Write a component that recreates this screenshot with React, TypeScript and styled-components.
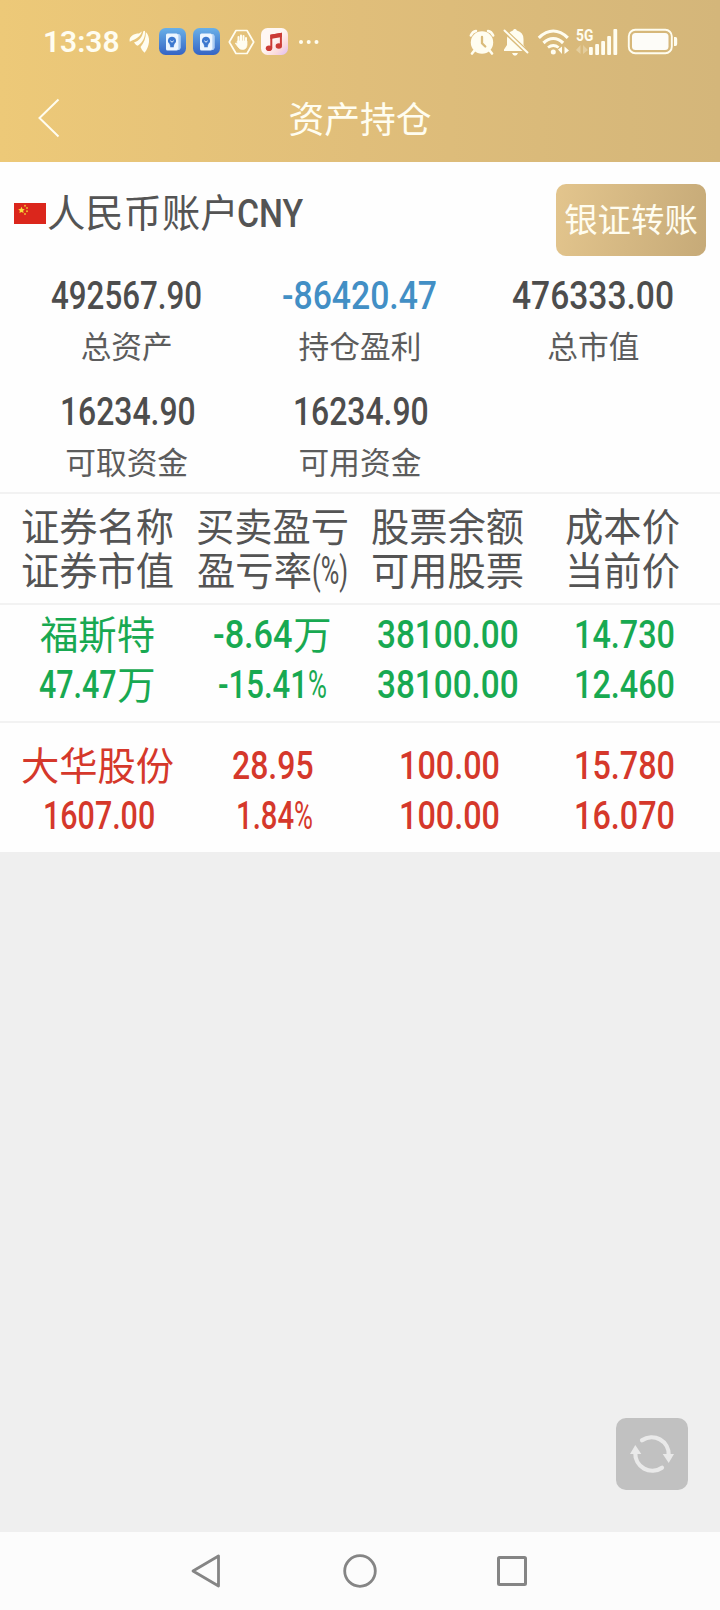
import React, { useLayoutEffect, useRef, useState } from "react";
import styled, { createGlobalStyle } from "styled-components";

const GlobalStyle = createGlobalStyle`
  * { box-sizing: border-box; }
  body { margin: 0; background: #efefef; font-family: "Noto Sans CJK SC", "Noto Sans", sans-serif; }
  svg { display: block; flex: none; }
`;

const Page = styled.div`
  width: 720px;
  height: 1610px;
  display: flex;
  flex-direction: column;
  overflow: hidden;
`;

const Header = styled.header`
  height: 162px;
  background: linear-gradient(90deg, #edc978 0%, #e0be7a 50%, #d4b67a 100%);
  color: #fffdf0;
`;

const StatusBar = styled.div`
  height: 83px;
  padding: 0 41px 0 43px;
  display: flex;
  justify-content: space-between;
  align-items: center;
`;

const StatusGroup = styled.div`
  display: flex;
  align-items: center;
`;

const Slot = styled.div<{ $gap: number }>`
  margin-left: ${(p) => p.$gap}px;
`;

const TitleBar = styled.div`
  height: 70px;
  display: grid;
  grid-template-columns: 100px 1fr 100px;
  align-items: center;
`;

const BackButton = styled.button`
  border: 0;
  background: none;
  padding: 0 0 0 37px;
  height: 44px;
`;

const Title = styled.h1`
  margin: 0;
  padding-bottom: 3px;
  font-size: 35.8px;
  line-height: 40px;
  font-weight: 400;
  text-align: center;
`;

const Card = styled.section`
  background: #fefefe;
  height: 690px;
`;

const AccountRow = styled.div`
  height: 106px;
  padding: 22px 14px 0 14px;
  display: flex;
  justify-content: space-between;
  align-items: flex-start;
`;

const AccountName = styled.div`
  display: flex;
  align-items: center;
  height: 59px;
  color: #545454;
`;

const TransferButton = styled.button`
  width: 150px;
  height: 72px;
  border: 0;
  border-radius: 10px;
  padding: 0 0 5px;
  background: linear-gradient(100deg, #e3c58d, #c6aa78);
  color: #fffdf0;
  font: 400 33.4px/40px "Noto Sans CJK SC", sans-serif;
  white-space: nowrap;
`;

const Summary = styled.div`
  height: 224px;
  padding: 0 10px;
  display: grid;
  grid-template-columns: repeat(3, 1fr);
  grid-template-rows: 116px 108px;
`;

const Metric = styled.div<{ $color?: string }>`
  display: flex;
  flex-direction: column;
  align-items: center;
  padding-top: 8px;
  color: ${(p) => p.$color ?? "#4d4d4d"};
`;

const MetricLabel = styled.div`
  font-size: 30.7px;
  line-height: 50px;
  margin-top: 4px;
  color: #5c5c5c;
`;

const Row = styled.div<{ $height: number; $top: number; $color: string }>`
  height: ${(p) => p.$height}px;
  padding: ${(p) => p.$top}px 10px 0;
  border-top: 2px solid #f2f2f2;
  display: grid;
  grid-template-columns: repeat(4, 1fr);
  color: ${(p) => p.$color};
`;

const Line = styled.div<{ $height: number }>`
  height: ${(p) => p.$height}px;
  display: flex;
  justify-content: center;
  align-items: center;
`;

const Han = styled.span`
  font-family: "Liberation Sans", "Noto Sans CJK SC", sans-serif;
  font-size: 38.3px;
  line-height: 40px;
  margin-top: 1px;
  white-space: nowrap;
`;

const FitBox = styled.span<{ $w: number; $size: number; $weight: number; $shift: number }>`
  display: block;
  width: ${(p) => p.$w}px;
  height: 40px;
  margin-left: ${(p) => p.$shift}px;
  font: ${(p) => p.$weight} ${(p) => p.$size}px/40px Roboto, "Liberation Sans", sans-serif;
  white-space: nowrap;
`;

const FitText = styled.span`
  display: inline-block;
  transform-origin: 0 50%;
`;

const Rest = styled.main`
  flex: 1;
  background: #efefef;
  display: flex;
  justify-content: flex-end;
  align-items: flex-end;
  padding: 0 32px 42px 0;
`;

const RefreshButton = styled.button`
  width: 72px;
  height: 72px;
  padding: 0;
  border: 0;
  border-radius: 10px;
  background: #c1c1c1;
`;

const NavBar = styled.nav`
  height: 78px;
  background: #fcfcfc;
  display: flex;
  align-items: center;
  justify-content: space-between;
  padding: 0 191px 0 189px;
`;

type NumProps = { text: string; w: number; size?: number; weight?: number };

/* Text set in a narrow face: squeezed horizontally to the width it is given. */
function Num({ text, w, size = 39.4, weight = 500 }: NumProps) {
  const ref = useRef<HTMLSpanElement>(null);
  const [scale, setScale] = useState(1);
  useLayoutEffect(() => {
    if (ref.current) setScale(w / ref.current.offsetWidth);
  }, [text, w]);
  const shift = size < 39 ? 0 : text.startsWith("1") ? 3 : text.startsWith("C") ? -2 : 0;
  return (
    <FitBox $w={w} $size={size} $weight={weight} $shift={shift}>
      <FitText ref={ref} style={{ transform: `scaleX(${scale})` }}>{text}</FitText>
    </FitBox>
  );
}

type Part = string | [string, number] | [string, number, number];

function Cell({ lines, height }: { lines: Part[][]; height: number }) {
  return (
    <div>
      {lines.map((parts, i) => (
        <Line key={i} $height={height}>
          {parts.map((p, j) =>
            typeof p === "string" ? <Han key={j}>{p}</Han> : <Num key={j} text={p[0]} w={p[1]} weight={p[2]} />
          )}
        </Line>
      ))}
    </div>
  );
}

const headings: Part[][][] = [
  [["证券名称"], ["证券市值"]],
  [["买卖盈亏"], ["盈亏率", ["(%)", 36, 400]]],
  [["股票余额"], ["可用股票"]],
  [["成本价"], ["当前价"]],
];

const holdings: { color: string; height: number; top: number; cells: Part[][][] }[] = [
  {
    color: "#18a951", height: 118, top: 5,
    cells: [
      [["福斯特"], [["47.47", 78], "万"]],
      [[["-8.64", 80], "万"], [["-15.41", 90], ["%", 19, 400]]],
      [[["38100.00", 142]], [["38100.00", 142]]],
      [[["14.730", 101]], [["12.460", 101]]],
    ],
  },
  {
    color: "#d5382b", height: 131, top: 18,
    cells: [
      [["大华股份"], [["1607.00", 112]]],
      [[["28.95", 82]], [["1.84", 58], ["%", 19, 400]]],
      [[["100.00", 101]], [["100.00", 101]]],
      [[["15.780", 101]], [["16.070", 101]]],
    ],
  },
];

const WingIcon = () => (
  <svg width="21" height="24" viewBox="0 0 21 24" fill="currentColor">
    <path d="M.5 10C1 6 5 3.500 10 3.500L13 1.500C12 5 9 8 5.500 9.500Q3 10.500.8 11.800ZM5 12.500C10 11 13.500 7 14.300 1.200L16 .8C16.500 7 14 12 8.800 15.800Q7 15.500 5 12.500ZM11.500 17C15 13 17 8 16.800 2C19 4 20.500 8 20 12C19.500 16 18 20 15.500 22.800Q13 21 11.500 17Z" />
  </svg>
);

const BookIcon = ({ id }: { id: string }) => (
  <svg width="27" height="27" viewBox="0 0 27 27">
    <defs>
      <linearGradient id={id} x1="0" y1="0" x2="0" y2="1">
        <stop offset="0" stopColor="#69b0e8" />
        <stop offset="1" stopColor="#3564c4" />
      </linearGradient>
    </defs>
    <rect width="27" height="27" rx="6.500" fill={`url(#${id})`} />
    <path d="M19 6.500h1.300v15H19zM21.200 7.500v13" fill="#d5e7fb" stroke="#b9d5f5" strokeWidth="1" />
    <rect x="7" y="5.500" width="12" height="17" rx="1.500" fill="#edf6ff" />
    <path d="M13 8.800a4 4 0 0 1 2.300 7.300v1.200h-4.600v-1.200A4 4 0 0 1 13 8.800ZM11.200 17.300h3.600v1.900h-3.600z" fill="#3c78cf" />
    <path d="m11.300 12.800 1.700 1.400 1.700-1.400" fill="none" stroke="#edf6ff" />
  </svg>
);

const HandIcon = () => (
  <svg width="27" height="26" viewBox="0 0 27 26" fill="none" stroke="currentColor" strokeLinecap="round" strokeLinejoin="round">
    <path d="M8 1.500h11L25.700 13 19 24.500H8L1.300 13Z" strokeWidth="1.700" />
    <path d="M10.500 13V8M13 12V6.500M15.500 12V7M18 13.500V9" strokeWidth="2" />
    <path d="M9.500 12h9.500v4q-.5 4.500-4.500 4.500-3 0-4.500-2.500L7.300 14.200q1-.8 2.200.8Z" fill="currentColor" strokeWidth=".7" />
  </svg>
);

const MusicIcon = () => (
  <svg width="27" height="27" viewBox="0 0 27 27">
    <defs>
      <linearGradient id="music" x1="0" y1="0" x2="1" y2="1">
        <stop offset=".45" stopColor="#fff7f3" />
        <stop offset=".75" stopColor="#fbd9dc" />
        <stop offset="1" stopColor="#dcbcfa" />
      </linearGradient>
    </defs>
    <rect width="27" height="27" rx="6.500" fill="url(#music)" />
    <path d="M10.300 20V7.700l9.600-1.800v11.600" fill="none" stroke="#cb3b36" strokeWidth="2" />
    <path d="M9.300 6.700 20.900 4.800v4.300L9.300 11z" fill="#cb3b36" />
    <ellipse cx="8" cy="20.200" rx="3.200" ry="2.800" fill="#cb3b36" />
    <ellipse cx="17.800" cy="18" rx="3.200" ry="2.800" fill="#cb3b36" />
  </svg>
);

const DotsIcon = () => (
  <svg width="22" height="6" viewBox="0 0 22 6" fill="currentColor">
    <circle cx="3" cy="3" r="2" /><circle cx="10.700" cy="3" r="2" /><circle cx="18.500" cy="3" r="2" />
  </svg>
);

const AlarmIcon = () => (
  <svg width="26" height="26" viewBox="0 0 26 26" fill="none" stroke="currentColor" strokeLinecap="round">
    <circle cx="13" cy="13.500" r="11.200" fill="currentColor" stroke="none" />
    <path d="M1.800 6.500Q3.500 2.500 7 2M24.200 6.500Q22.500 2.500 19 2" strokeWidth="2.500" />
    <path d="m5 22-2 2.500M21 22l2 2.500" strokeWidth="2.600" />
    <path d="M13 8v6.200l3.300 3.300" stroke="#dabb7a" strokeWidth="2.300" />
  </svg>
);

const MutedIcon = () => (
  <svg width="26" height="28" viewBox="0 0 26 28">
    <path d="M12 1a1.800 1.800 0 0 1 1.800 1.500Q20.500 4.200 20.500 11v6l3 5v1H1v-1.500l3-4.500v-6Q4 4.500 10 2.500A1.800 1.800 0 0 1 12 1ZM9 25h6q-1 2.800-3 2.800T9 25Z" fill="currentColor" />
    <path d="m2 3.200 22 21" stroke="#dabb7a" strokeWidth="4.600" />
    <path d="m1.500 2.500 23 22" stroke="currentColor" strokeWidth="1.900" strokeLinecap="round" />
  </svg>
);

const WifiIcon = () => (
  <svg width="33" height="26" viewBox="0 0 33 26" fill="none" stroke="currentColor">
    <path d="M1.800 8.800Q9 2 16.300 2T30.800 8.800" strokeWidth="3.200" />
    <path d="M6.500 14Q11 9.500 16.300 9.500T26.100 14" strokeWidth="3.200" />
    <path d="M11 18.500q5.300-4 10.600 0" strokeWidth="2.800" />
    <circle cx="16.300" cy="23" r="2.500" fill="currentColor" stroke="none" />
    <path d="M25 17.500V25l-4-4.500ZM27.500 25v-7.500l4.500 4Z" fill="currentColor" stroke="none" />
  </svg>
);

const SignalMark = styled.div`
  display: flex;
  align-items: flex-end;
  height: 26px;
`;

const NetworkColumn = styled.div`
  display: flex;
  flex-direction: column;
  align-items: flex-start;
  width: 12px;
`;

const NetworkType = styled.div`
  height: 15px;
  margin-bottom: 1px;
  & > span { font-size: 16.500px; line-height: 14px; height: 14px; font-weight: 700; }
`;

const Signal = () => (
  <SignalMark>
    <NetworkColumn>
      <NetworkType><Num text="5G" w={17.5} size={16.5} weight={700} /></NetworkType>
      <svg width="12" height="10" viewBox="0 0 12 10" fill="currentColor" opacity=".3">
        <path d="M4.500 0v9L0 5ZM7 9V0l5 5Z" />
      </svg>
    </NetworkColumn>
    <svg width="30" height="26" viewBox="0 0 30 26" fill="currentColor">
      <rect x="1" y="18" width="3.800" height="8" rx="1" /><rect x="7.200" y="15" width="3.800" height="11" rx="1" />
      <rect x="13.200" y="12" width="3.800" height="14" rx="1" /><rect x="19.200" y="7" width="3.800" height="19" rx="1" />
      <rect x="25.400" y="0" width="3.800" height="26" rx="1" />
    </svg>
  </SignalMark>
);

const BatteryIcon = () => (
  <svg width="52" height="27" viewBox="0 0 52 27">
    <rect x="1.800" y="1.800" width="43" height="23.400" rx="6.500" fill="none" stroke="currentColor" strokeWidth="1.900" />
    <rect x="5" y="5" width="36.500" height="17" rx="3.500" fill="#fdfcf8" />
    <path d="M47 9h1.500q1.700 0 1.700 2v5q0 2-1.700 2H47Z" fill="currentColor" />
  </svg>
);

const FlagIcon = () => (
  <svg width="32" height="21" viewBox="0 0 32 21">
    <rect width="32" height="21" fill="#db261c" />
    <path d="m7.500 3.800 1 2.200 2.300.2-1.700 1.600.5 2.300-2.100-1.200-2.100 1.200.5-2.300-1.700-1.600 2.300-.2Z" fill="#f5dc3a" />
    <g fill="#efb52f"><circle cx="11" cy="2.800" r="1" /><circle cx="13" cy="5" r="1" /><circle cx="13" cy="8.300" r="1" /><circle cx="11" cy="11" r="1" /></g>
  </svg>
);

const metrics = [
  { value: "492567.90", w: 151, label: "总资产" },
  { value: "-86420.47", w: 155, label: "持仓盈利", color: "#428fc5" },
  { value: "476333.00", w: 162, label: "总市值" },
  { value: "16234.90", w: 136, label: "可取资金" },
  { value: "16234.90", w: 136, label: "可用资金" },
];

export default function App() {
  return (
    <Page>
      <GlobalStyle />
      <Header>
        <StatusBar>
          <StatusGroup>
            <Num text="13:38" w={76} size={29.5} weight={600} />
            <Slot $gap={10}><WingIcon /></Slot>
            <Slot $gap={9}><BookIcon id="bookA" /></Slot>
            <Slot $gap={7}><BookIcon id="bookB" /></Slot>
            <Slot $gap={8}><HandIcon /></Slot>
            <Slot $gap={6}><MusicIcon /></Slot>
            <Slot $gap={10}><DotsIcon /></Slot>
          </StatusGroup>
          <StatusGroup>
            <AlarmIcon />
            <Slot $gap={8}><MutedIcon /></Slot>
            <Slot $gap={8}><WifiIcon /></Slot>
            <Slot $gap={6}><Signal /></Slot>
            <Slot $gap={9}><BatteryIcon /></Slot>
          </StatusGroup>
        </StatusBar>
        <TitleBar>
          <BackButton aria-label="返回">
            <svg width="24" height="42" viewBox="0 0 24 42" fill="none" stroke="#fffdf0" strokeWidth="2">
              <path d="M21.500 2.500 2.500 21l19 18.500" />
            </svg>
          </BackButton>
          <Title>资产持仓</Title>
        </TitleBar>
      </Header>
      <Card>
        <AccountRow>
          <AccountName>
            <FlagIcon />
            <Slot $gap={1}><Han>人民币账户</Han></Slot>
            <Num text="CNY" w={66} />
          </AccountName>
          <TransferButton>银证转账</TransferButton>
        </AccountRow>
        <Summary>
          {metrics.map((m, i) => (
            <Metric key={i} $color={m.color}>
              <Num text={m.value} w={m.w} />
              <MetricLabel>{m.label}</MetricLabel>
            </Metric>
          ))}
        </Summary>
        <Row $height={111} $top={11} $color="#545454">
          {headings.map((lines, i) => <Cell key={i} lines={lines} height={44} />)}
        </Row>
        {holdings.map((h, i) => (
          <Row key={i} $height={h.height} $top={h.top} $color={h.color}>
            {h.cells.map((lines, j) => <Cell key={j} lines={lines} height={50} />)}
          </Row>
        ))}
      </Card>
      <Rest>
        <RefreshButton aria-label="刷新">
          <svg width="72" height="72" viewBox="0 0 72 72" fill="none" stroke="#e9e9e9" strokeWidth="4.200" strokeLinecap="round">
            <path d="M26 22.300A17 17 0 0 1 52.700 37M46 49.700A17 17 0 0 1 19.300 35" />
            <path d="M46.700 36H58l-5.300 9ZM14 36h11.300l-6-9Z" fill="#e9e9e9" stroke="none" />
          </svg>
        </RefreshButton>
      </Rest>
      <NavBar>
        <svg width="34" height="36" viewBox="0 0 34 36" fill="none" stroke="#858585" strokeWidth="2.800" strokeLinejoin="round">
          <path d="M29.500 3v30L4 18Z" />
        </svg>
        <svg width="36" height="36" viewBox="0 0 36 36" fill="none" stroke="#858585" strokeWidth="2.800">
          <circle cx="19" cy="18" r="15.300" />
        </svg>
        <svg width="34" height="36" viewBox="0 0 34 36" fill="none" stroke="#858585" strokeWidth="3">
          <rect x="3.500" y="4.500" width="27" height="27" rx="1" />
        </svg>
      </NavBar>
    </Page>
  );
}
